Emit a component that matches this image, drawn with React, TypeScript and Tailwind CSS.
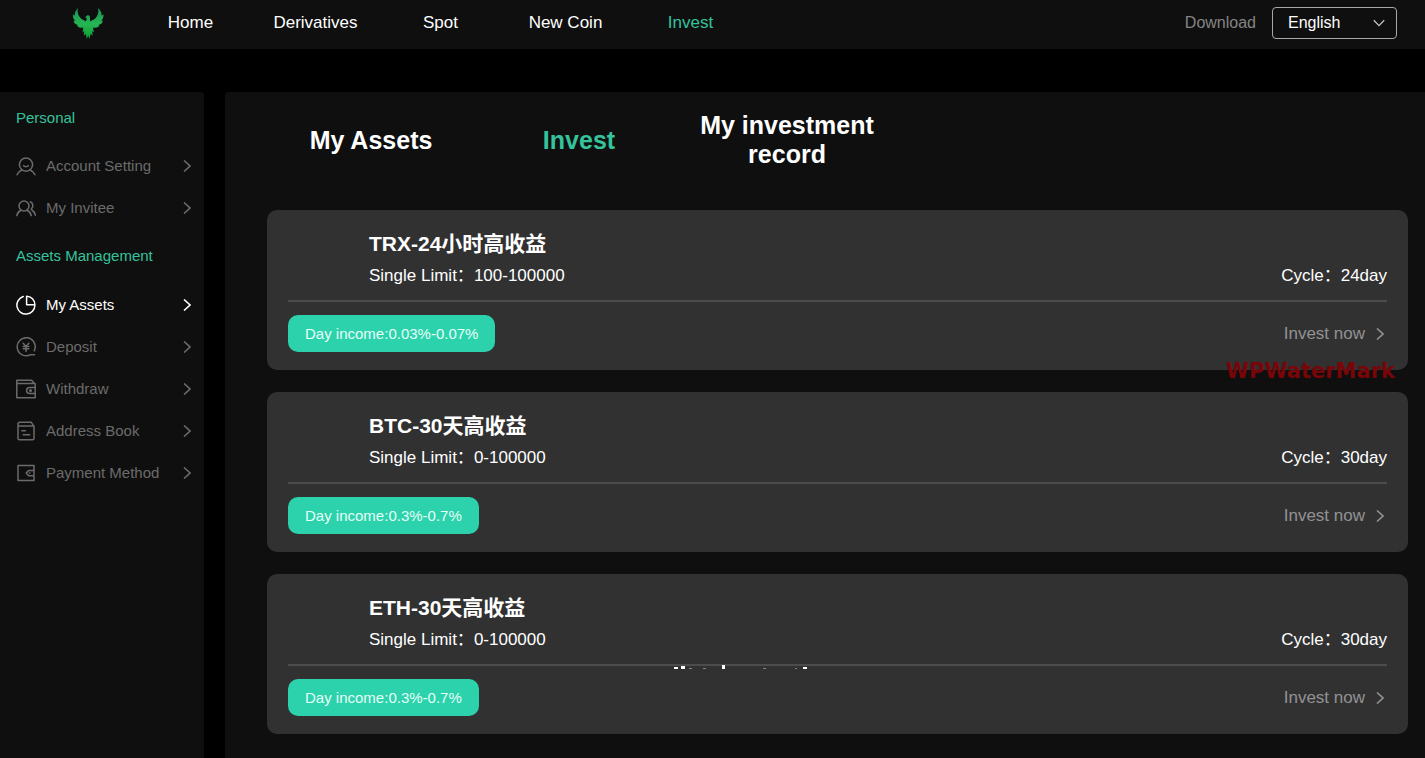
import type { ReactNode } from "react";

const navItems = ["Home", "Derivatives", "Spot", "New Coin", "Invest"];

const plans = [
  { name: "TRX-24小时高收益", limit: "100-100000", cycle: "24day", income: "0.03%-0.07%" },
  { name: "BTC-30天高收益", limit: "0-100000", cycle: "30day", income: "0.3%-0.7%" },
  { name: "ETH-30天高收益", limit: "0-100000", cycle: "30day", income: "0.3%-0.7%" },
];

function Icon({ children }: { children: ReactNode }) {
  return (
    <svg
      className="h-5 w-5 shrink-0"
      viewBox="0 0 20 20"
      fill="none"
      stroke="currentColor"
      strokeWidth="1.5"
      strokeLinecap="round"
      strokeLinejoin="round"
      aria-hidden="true"
    >
      {children}
    </svg>
  );
}

const personalLinks = [
  {
    label: "Account Setting",
    icon: (
      <Icon>
        <circle cx="10" cy="8.6" r="6.6" />
        <path d="M7.6 9.8c1.200 1.200 3.600 1.200 4.800 0M6 14C3.800 14.800 2 16.400 1 18.800M14 14c2.200.8 4 2.400 5 4.800" />
      </Icon>
    ),
  },
  {
    label: "My Invitee",
    icon: (
      <Icon>
        <circle cx="8" cy="8" r="5" />
        <path d="M5 12.200C2.800 13.200 1.300 15 .8 17.600M11 12.200c2.200 1 3.700 2.800 4.200 5.400M14.400 3.800c2.600 1.200 3.200 4.600 1.200 6.800-.5.600-.3 1 .3 1.400 1.900 1.200 2.900 2.800 3.400 5.200" />
      </Icon>
    ),
  },
];

const assetLinks = [
  {
    label: "My Assets",
    active: true,
    icon: (
      <Icon>
        <path d="M7.200 1.500a9 9 0 1 0 11.700 8.700M10.600 1.300v8.400h8.300a8.400 8.400 0 0 0-8.300-8.400z" />
      </Icon>
    ),
  },
  {
    label: "Deposit",
    icon: (
      <Icon>
        <path d="M14.500 17.600A9 9 0 1 1 18.200 13.800M14 17.800h4.500" />
        <path d="M7.200 6.200 10 9.400l2.800-3.200M7.200 9.600h5.600M7.200 11.800h5.600M10 9.400v5" />
      </Icon>
    ),
  },
  {
    label: "Withdraw",
    icon: (
      <Icon>
        <path d="M.8 4.500V1.200h14.800l2.600 3M.8 4.500h18.400v14.300H.8zM19.200 8.600h-5.600a3 3 0 0 0 0 6h5.600" />
        <circle cx="14.500" cy="11.600" r=".8" />
      </Icon>
    ),
  },
  {
    label: "Address Book",
    icon: (
      <Icon>
        <path d="M2 5.200V3.200c0-1.200.6-2 1.800-2h11.400l2.400 3.600M2 5h16v12.400c0 .8-.5 1.400-1.400 1.400H3.400c-.9 0-1.400-.6-1.400-1.400zM5.800 9.800h3.600M7.200 13.800h6.400" />
      </Icon>
    ),
  },
  {
    label: "Payment Method",
    icon: (
      <Icon>
        <path d="M2 2.500h16v15H2zM18 7.400h-5.400l-2.400 2.700 2.400 2.700H18M13.400 10.100h.4" />
      </Icon>
    ),
  },
];

function Chevron() {
  return (
    <svg
      className="h-3 w-2 shrink-0"
      viewBox="0 0 8 12"
      fill="none"
      stroke="currentColor"
      strokeWidth="1.600"
      aria-hidden="true"
    >
      <path d="M1 .5 7 6l-6 5.500" />
    </svg>
  );
}

function Logo() {
  return (
    <svg className="h-8 w-8" viewBox="0 0 32 32" role="img" aria-label="Phoenix logo">
      <defs>
        <linearGradient id="phoenix" x1="0" y1="0" x2="0" y2="1">
          <stop offset="0" stopColor="#1f8f55" />
          <stop offset=".5" stopColor="#25b552" />
          <stop offset="1" stopColor="#109c34" />
        </linearGradient>
      </defs>
      <path
        fill="url(#phoenix)"
        d="M6 1C5 5 6 9 9 11.500c1.600 1.300 3.500 2 5 3l.8-3.500-1.800-.8 2.800-2.200 2 1 .4 5.500c1.500-1 3.400-1.700 5-3C26 9 27 5 26 1c3 2.500 4 5.500 3.500 7.500L31.500 7.500c.2 3-.8 5-2.500 6.200l2 .1c-.8 2.600-2.600 4-4.600 4.300l1 .8c-1.600 1.600-4 2-6.400 1.800l1 4.800-1.800-1.500.4 4.500-2-1.500-1.200 5-1.200-3.500-1.400 3.500-1-5-2 1.500.4-4.500-1.800 1.500 1-4.800c-2.400.2-4.800-.2-6.400-1.800l1-.8c-2-.3-3.800-1.700-4.600-4.300l2-.1C1.700 12.500.7 10.500.9 7.500l2 1C2.400 6.500 3.500 3.500 6 1z"
      />
    </svg>
  );
}

function SideLink({ label, icon, active }: { label: string; icon: ReactNode; active?: boolean }) {
  return (
    <a
      href="#"
      className={
        active
          ? "flex h-[42px] items-center gap-[10px] text-white"
          : "flex h-[42px] items-center gap-[10px] text-[#6b6b6b]"
      }
    >
      {icon}
      <span className="flex-1 whitespace-nowrap">{label}</span>
      <Chevron />
    </a>
  );
}

export default function App() {
  return (
    <div className="flex min-h-screen flex-col bg-black font-['Liberation_Sans','Noto_Sans_CJK_SC',sans-serif] text-white">
      <header className="flex h-[49px] items-center bg-[#0f0f0f] pr-7 pb-1 pl-[72px] text-[17px]">
        <a href="#" className="w-14 shrink-0">
          <Logo />
        </a>
        <nav className="flex flex-1">
          {navItems.map((item) => (
            <a
              key={item}
              href="#"
              className={
                item === "Invest"
                  ? "w-[125px] text-center text-[#35c39c]"
                  : "w-[125px] text-center"
              }
            >
              {item}
            </a>
          ))}
        </nav>
        <a href="#" className="mr-4 text-base text-[#858585]">
          Download
        </a>
        <div className="grid items-center">
          <select
            aria-label="Language"
            className="col-start-1 row-start-1 h-8 w-[125px] appearance-none rounded border border-[#a8a8a8] bg-transparent px-[15px] text-base text-white"
          >
            <option>English</option>
          </select>
          <svg
            className="pointer-events-none col-start-1 row-start-1 mr-3 h-2 w-3 justify-self-end"
            viewBox="0 0 12 8"
            fill="none"
            stroke="#c4c4c4"
            strokeWidth="1.300"
            aria-hidden="true"
          >
            <path d="m.8 1.200 5.200 5.400 5.200-5.400" />
          </svg>
        </div>
      </header>

      <div className="mt-[43px] flex flex-1 gap-[21px]">
        <aside className="w-[204px] shrink-0 rounded-tr bg-[#0f0f0f] pr-[13px] pl-4 text-[15px]">
          <h2 className="flex h-[53px] items-center text-[#35c39c]">Personal</h2>
          {personalLinks.map((link) => (
            <SideLink key={link.label} {...link} />
          ))}
          <h2 className="flex h-[55px] items-center text-[#35c39c]">Assets Management</h2>
          {assetLinks.map((link) => (
            <SideLink key={link.label} {...link} />
          ))}
        </aside>

        <main className="min-w-0 flex-1 rounded-tl bg-[#0f0f0f] pr-[17px] pb-6 pl-[42px]">
          <div className="flex h-[118px] items-center pb-[22px] text-center text-[25px] leading-[29px] font-bold">
            <a href="#" className="w-52">
              My Assets
            </a>
            <a href="#" className="w-52 text-[#35c39c]">
              Invest
            </a>
            <a href="#" className="w-52">
              My investment
              <br />
              record
            </a>
          </div>

          <div className="relative flex flex-col gap-[22px]">
            {plans.map((plan) => (
              <section key={plan.name} className="h-40 rounded-[10px] bg-[#313132] px-[21px] pt-5">
                <div className="flex h-[72px] items-end justify-between border-b-2 border-[#4c4c4c] pb-[14px] pl-[81px] text-[17px] leading-5">
                  <div>
                    <h3 className="mb-[9px] text-[21px] leading-[27px] font-bold">{plan.name}</h3>
                    <p>Single Limit：{plan.limit}</p>
                  </div>
                  <p>Cycle：{plan.cycle}</p>
                </div>
                <div className="mt-[13px] flex items-center justify-between">
                  <span className="flex h-[37px] items-center rounded-[10px] bg-[#2cd2ac] px-[17px] pt-px text-[15px] text-[#e6fff8]">
                    Day income:{plan.income}
                  </span>
                  <button type="button" className="flex items-center gap-[11px] pr-[3px] text-[17px] text-[#929292]">
                    Invest now
                    <Chevron />
                  </button>
                </div>
              </section>
            ))}
            <span className="pointer-events-none absolute top-[149px] right-[13px] font-['DejaVu_Sans',sans-serif] text-[21px] leading-6 font-bold text-[#780508]">
              WPWaterMark
            </span>
            <svg
              className="pointer-events-none absolute top-[455px] left-[405px] h-1 w-36"
              viewBox="0 0 144 4"
              fill="#fff"
              aria-hidden="true"
            >
              <path d="M2 2h4v2H2zM9 1h4v3H9zM50 0h3v4h-3zM131 2h4v2h-4z" />
              <path d="M17 3h3v1h-3zM31 3h3v1h-3zM91 3h3v1h-3zM123 3h2v1h-2z" opacity=".4" />
            </svg>
          </div>
        </main>
      </div>
    </div>
  );
}
